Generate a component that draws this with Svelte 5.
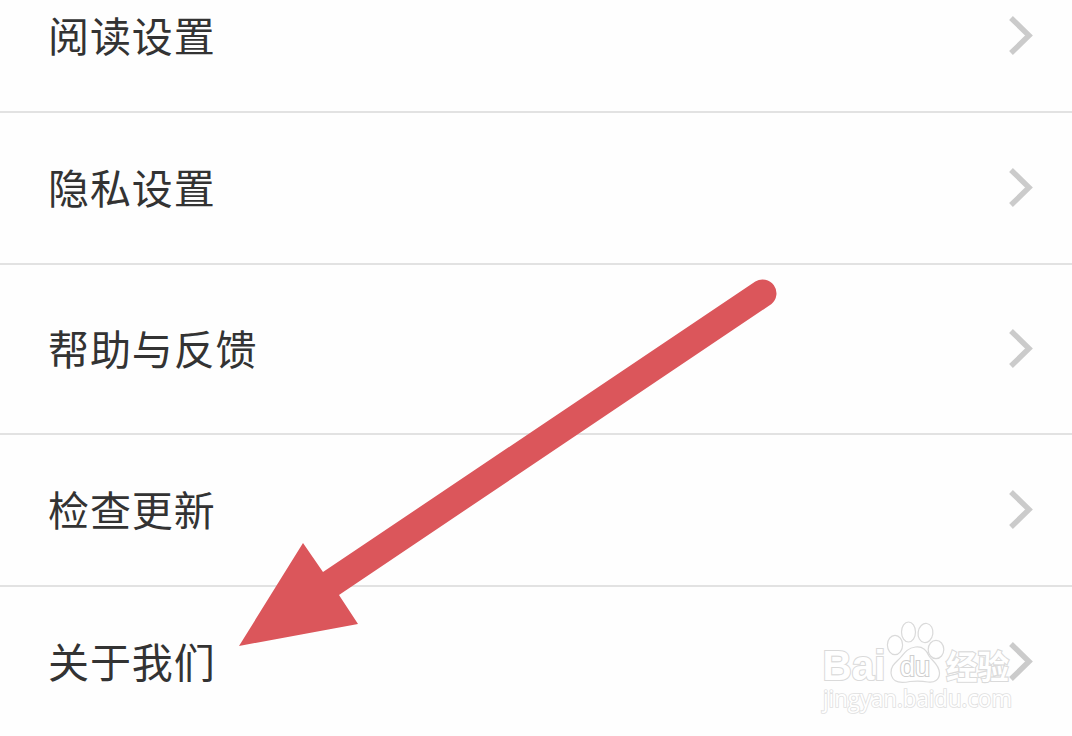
<script lang="ts">
  interface Item {
    label: string;
    tall?: boolean;
  }

  const items: Item[] = [
    { label: '阅读设置' },
    { label: '隐私设置' },
    { label: '帮助与反馈', tall: true },
    { label: '检查更新' },
    { label: '关于我们' }
  ];
</script>

<main class="screen">
  <ul class="list">
    {#each items as item}
      <li class="row" class:tall={item.tall}>
        <span class="label">{item.label}</span>
        <svg class="chevron" width="26" height="42" viewBox="0 0 26 42" aria-hidden="true">
          <path d="M3 3 21 20.500 3 38" />
        </svg>
      </li>
    {/each}
  </ul>

  <svg class="arrow" viewBox="0 0 1072 736" aria-hidden="true">
    <path d="M239 646 303 543 323 572 755.300 281.500A13.900 13.900 0 0 1 771.500 304L339 595 358 624Z" />
  </svg>

  <svg class="watermark" width="210" height="106" viewBox="0 0 210 106">
    <g class="logo">
      <text class="brand" x="2.500" y="60" textLength="63" lengthAdjust="spacingAndGlyphs">Bai</text>
      <ellipse cx="75" cy="25" rx="7.600" ry="9.600" />
      <ellipse cx="88.500" cy="12" rx="7" ry="10" />
      <ellipse cx="105.500" cy="13" rx="7.400" ry="9.600" transform="rotate(8 105.5 13)" />
      <ellipse cx="116" cy="29.500" rx="7.800" ry="9.200" />
      <path d="M95.500 27C103 26 107 31 109 36C112 41 119 44 119.500 53C119.500 60 114 63 108 62C102 61 96 61 90 61.500C83 63 72 64 71 53C70.500 45 77 42 81 37C85 32 88 28 95.500 27Z" />
      <text class="du" x="80" y="56" textLength="30" lengthAdjust="spacingAndGlyphs">du</text>
      <text class="cn" x="126" y="58.500" textLength="63" lengthAdjust="spacingAndGlyphs">经验</text>
    </g>
    <text class="site" x="3" y="87" textLength="189" lengthAdjust="spacingAndGlyphs">jingyan.baidu.com</text>
  </svg>
</main>

<style>
  :global(body) {
    background: #fefefe;
    overflow: hidden;
  }

  .screen {
    position: relative;
    width: 1072px;
    height: 736px;
    overflow: hidden;
    background: #fefefe;
    font-family: 'Noto Sans CJK SC', sans-serif;
  }

  .list {
    margin: -39px 0 0;
    padding: 0;
    list-style: none;
  }

  .row {
    display: flex;
    align-items: center;
    justify-content: space-between;
    box-sizing: border-box;
    height: 152px;
    padding: 0 38px 0 48px;
    border-bottom: 2px solid #e2e2e2;
  }

  .row.tall {
    height: 170px;
  }

  .label {
    color: #333;
    font-size: 41px;
    line-height: 60px;
    letter-spacing: 0.9px;
    padding-bottom: 4px;
  }

  .chevron {
    fill: none;
    stroke: #cbcbcb;
    stroke-width: 5.4;
  }

  .arrow {
    position: absolute;
    inset: 0;
    fill: #db565b;
  }

  .watermark {
    position: absolute;
    left: 820px;
    top: 620px;
  }

  .logo {
    fill: #fff;
    stroke: #dadada;
    stroke-width: 1.2;
  }

  .logo text {
    paint-order: stroke;
    stroke-width: 2.2;
  }

  .brand {
    font: bold 43px 'Liberation Sans', sans-serif;
  }

  .logo .du {
    font: 27px 'Liberation Sans', sans-serif;
    stroke: #cfcfcf;
  }

  .cn {
    font: 700 33px 'Noto Sans CJK SC', sans-serif;
  }

  .site {
    fill: #fff;
    stroke: #e0e0e0;
    stroke-width: 1.7;
    paint-order: stroke;
    font: 400 23px 'Open Sans', sans-serif;
  }
</style>
